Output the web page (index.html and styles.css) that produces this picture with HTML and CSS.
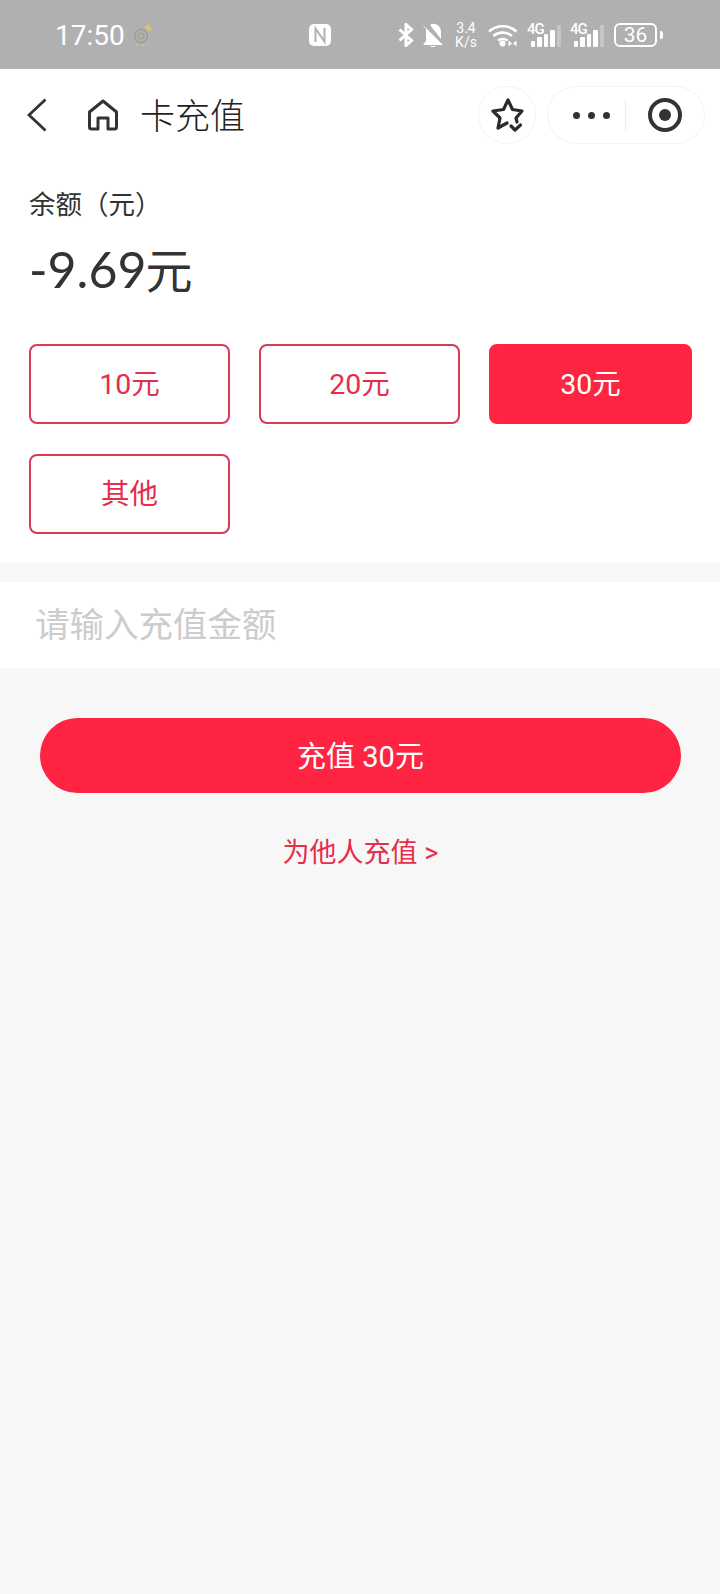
FILE: index.html
```html
<!DOCTYPE html>
<html lang="zh-CN">
<head>
    <meta charset="UTF-8">
    <meta name="viewport" content="width=device-width, initial-scale=1.0">
    <title>卡充值</title>
    <link rel="stylesheet" href="styles.css">
</head>
<body>

    <div class="status-bar">
        <span class="status-time">17:50</span>
        <svg class="status-badge" width="22" height="24" viewBox="0 0 22 24" fill="none">
            <circle cx="7" cy="13" r="6.500" stroke="#9d978e" stroke-width="1.200"/>
            <circle cx="7" cy="13" r="3" stroke="#a59c86" stroke-width="1.200"/>
            <path d="M10 4l4-3 2 3 3 1-4 4z" fill="#cfc575"/>
            <path d="M2 22h11" stroke="#c8c8c8" stroke-width="1.200" stroke-dasharray="3 2"/>
        </svg>
        <svg class="status-nfc" width="22" height="22" viewBox="0 0 22 22">
            <rect width="22" height="22" rx="5" fill="#fff"/>
            <path d="M6.500 18V4.500l9 13V4" fill="none" stroke="#b0b0b0" stroke-width="2"/>
        </svg>
        <div class="status-right">
            <svg width="16" height="24" viewBox="0 0 16 24" fill="none" stroke="#fff" stroke-width="3">
                <path d="M1.500 6.500l12 11-5.500 5V1.500l5.500 5-12 11"/>
            </svg>
            <svg class="status-bell" width="22" height="24" viewBox="0 0 22 24" fill="#fff">
                <path d="M0 1l21 21H1l3-4V6z"/>
                <path d="M8 2c2-1.500 4.500-1.500 6.500-.5 3 1.500 4.500 4 4.500 7.500v7z"/>
                <path d="M8 23h6c-.5 .7-1.500 1-3 1s-2.500-.3-3-1z"/>
            </svg>
            <span class="status-speed">3.4<br>K/s</span>
            <svg class="status-wifi" width="30" height="24" viewBox="0 0 30 24" fill="none" stroke="#fff" stroke-width="2.600">
                <path d="M1 8.500c7.500-7 20-7 27.500 0M5.500 13c5-4.500 13.500-4.500 18.500 0M10 17.500c2.500-2 7-2 9.500 0"/>
                <circle cx="14.500" cy="20.500" r="3" fill="#fff" stroke="none"/>
                <path d="M24 20.500l-3.500-3v6zM25 20.500l3.500-3v6z" fill="#fff" stroke="none"/>
            </svg>
            <div class="status-signal">
                <span class="signal-label">4G</span>
                <span class="signal-bars">
                    <i class="bar-1"></i><i class="bar-2"></i><i class="bar-3"></i><i class="bar-4"></i><i class="bar-off"></i>
                </span>
            </div>
            <div class="status-signal">
                <span class="signal-label">4G</span>
                <span class="signal-bars">
                    <i class="bar-1"></i><i class="bar-2"></i><i class="bar-3"></i><i class="bar-4"></i><i class="bar-off"></i>
                </span>
            </div>
            <div class="battery"><span>36</span></div>
            <div class="battery-nub"></div>
        </div>
    </div>

    <header class="nav-bar">
        <svg class="nav-back" width="20" height="34" viewBox="0 0 20 34" fill="none" stroke="#333" stroke-width="2.800">
            <path d="M18.500 1.500L2 17l16.500 15.500"/>
        </svg>
        <svg class="nav-home" width="32" height="32" viewBox="0 0 32 32" fill="none" stroke="#333" stroke-width="3" stroke-linejoin="round">
            <path d="M11 30H4.500a2 2 0 0 1-2-2V13L16 2l13.500 11v15a2 2 0 0 1-2 2H21V19H11z"/>
        </svg>
        <h1 class="nav-title">卡充值</h1>
        <div class="nav-actions">
            <div class="nav-star">
                <svg width="34" height="36" viewBox="0 0 34 36" fill="none" stroke="#2b2b2b" stroke-width="3.200" stroke-linejoin="round" stroke-linecap="round">
                    <path d="M17 26l-9 5 2-10-7-7 10.500-1.500L18 3l4.500 9.500L32 14l-6 7 1 4"/>
                    <path d="M21 29l4 4 5.500-5"/>
                </svg>
            </div>
            <div class="nav-capsule">
                <div class="capsule-dots"><i></i><i></i><i></i></div>
                <div class="capsule-line"></div>
                <div class="capsule-record"><i></i></div>
            </div>
        </div>
    </header>

    <section class="balance">
        <div class="balance-label">余额（元）</div>
        <div class="balance-value">-9.69<span>元</span></div>
        <div class="amount-grid">
            <button class="amount-btn">10元</button>
            <button class="amount-btn">20元</button>
            <button class="amount-btn active">30元</button>
            <button class="amount-btn">其他</button>
        </div>
    </section>

    <div class="input-row">
        <input class="amount-input" type="text" placeholder="请输入充值金额">
    </div>

    <div class="submit-row">
        <button class="submit-btn">充值 30元</button>
        <a class="other-link" href="#">为他人充值 &gt;</a>
    </div>

</body>
</html>
```

FILE: styles.css
```css
* {
    box-sizing: border-box;
}

html, body {
    height: 100%;
}

body {
    margin: 0;
    padding: 0;
    background-color: #f7f7f7;
    color: #333;
    font-family: Roboto, 'Noto Sans CJK SC', sans-serif;
    text-spacing-trim: space-all;
    overflow: hidden;
}

/* status bar */
.status-bar {
    display: flex;
    align-items: center;
    height: 69px;
    padding-left: 55px;
    background-color: #b0b0b0;
    color: #fff;
}

.status-time {
    width: 79px;
    padding-top: 2px;
    font-size: 28px;
    font-weight: 400;
}

.status-nfc {
    margin-left: 153px;
}

.status-right {
    display: flex;
    align-items: center;
    margin-left: 67px;
}

.status-bell {
    margin-left: 8px;
}

.status-speed {
    width: 24px;
    margin-left: 10px;
    font-size: 14px;
    line-height: 14px;
    text-align: center;
}

.status-wifi {
    margin-left: 10px;
}

.status-signal {
    position: relative;
    width: 34px;
    height: 24px;
    margin-left: 9px;
}

.status-signal + .status-signal {
    margin-left: 9px;
}

.signal-label {
    position: absolute;
    left: 0;
    top: -3px;
    font-size: 15px;
    font-weight: 500;
    letter-spacing: -1px;
}

.signal-bars {
    position: absolute;
    right: 0;
    bottom: 0;
    display: flex;
    align-items: flex-end;
    gap: 2px;
}

.signal-bars i {
    display: block;
    width: 4.500px;
    background-color: #fff;
    border-radius: 1px;
}

.bar-1 { height: 6px; }
.bar-2 { height: 10px; }
.bar-3 { height: 13px; }
.bar-4 { height: 17px; }

.signal-bars .bar-off {
    height: 22px;
    background-color: #c6c6c6;
}

.battery {
    display: flex;
    align-items: center;
    justify-content: center;
    width: 43px;
    height: 24px;
    margin-left: 10px;
    border: 2px solid #fff;
    border-radius: 6px;
    font-size: 21px;
    font-weight: 400;
}

.battery-nub {
    width: 3px;
    height: 8px;
    margin-left: 3px;
    background-color: #fff;
    border-radius: 0 2px 2px 0;
}

/* nav bar */
.nav-bar {
    display: flex;
    align-items: center;
    height: 92px;
    padding-left: 27px;
    background-color: #fff;
}

.nav-back {
    flex: none;
}

.nav-home {
    flex: none;
    margin-left: 40px;
}

.nav-title {
    margin: 0 0 4px 21px;
    font-size: 35px;
    font-weight: 300;
    color: #222;
}

.nav-actions {
    display: flex;
    align-items: center;
    gap: 11px;
    margin-left: auto;
    margin-right: 15px;
}

.nav-star {
    display: flex;
    align-items: center;
    justify-content: center;
    width: 58px;
    height: 58px;
    border: 1px solid #f3f3f3;
    border-radius: 50%;
}

.nav-capsule {
    display: flex;
    align-items: center;
    width: 158px;
    height: 58px;
    padding-left: 25px;
    border: 1px solid #f3f3f3;
    border-radius: 29px;
}

.capsule-dots {
    display: flex;
    gap: 8px;
}

.capsule-dots i {
    display: block;
    width: 7px;
    height: 7px;
    background-color: #333;
    border-radius: 50%;
}

.capsule-line {
    width: 1px;
    height: 33px;
    margin-left: 15px;
    background-color: #eee;
}

.capsule-record {
    display: flex;
    align-items: center;
    justify-content: center;
    width: 34px;
    height: 34px;
    margin-left: 22px;
    border: 4px solid #333;
    border-radius: 50%;
}

.capsule-record i {
    display: block;
    width: 12px;
    height: 12px;
    background-color: #333;
    border-radius: 50%;
}

/* balance and amounts */
.balance {
    height: 402px;
    padding: 26px 28px 0 29px;
    background-color: #fff;
}

.balance-label {
    height: 36px;
    font-size: 26.500px;
    font-weight: 400;
    line-height: 36px;
}

.balance-value {
    height: 60px;
    margin-top: 15px;
    font-family: Lato, 'Noto Sans CJK SC', sans-serif;
    font-size: 50px;
    line-height: 60px;
}

.balance-value span {
    font-family: 'Noto Sans CJK SC', sans-serif;
    font-size: 47px;
    margin-left: -1px;
}

.amount-grid {
    display: grid;
    grid-template-columns: 201px 201px 1fr;
    gap: 30px 29px;
    margin-top: 46px;
}

.amount-btn {
    height: 80px;
    padding: 0 0 6px;
    background-color: #fff;
    border: 2px solid #d93a58;
    border-radius: 8px;
    color: #e62d4c;
    font-family: inherit;
    font-size: 28.500px;
}

.amount-btn.active {
    background-color: #ff2442;
    border-color: #ff2442;
    color: #fff;
}

/* input */
.input-row {
    height: 86px;
    margin-top: 19px;
    background-color: #fff;
}

.amount-input {
    width: 100%;
    height: 100%;
    padding: 0 35px;
    background: transparent;
    border: none;
    outline: none;
    font-family: inherit;
    font-size: 34.500px;
}

.amount-input::placeholder {
    color: #ccc;
    opacity: 1;
}

/* submit */
.submit-row {
    display: flex;
    flex-direction: column;
    align-items: center;
    padding: 50px 39px 0 40px;
}

.submit-btn {
    width: 100%;
    height: 75px;
    padding: 0 0 4px;
    background-color: #ff2442;
    border: none;
    border-radius: 38px;
    color: #fff;
    font-family: inherit;
    font-size: 29px;
}

.other-link {
    margin-top: 40px;
    color: #e62d4c;
    font-size: 27px;
    line-height: 40px;
    text-decoration: none;
}
```
